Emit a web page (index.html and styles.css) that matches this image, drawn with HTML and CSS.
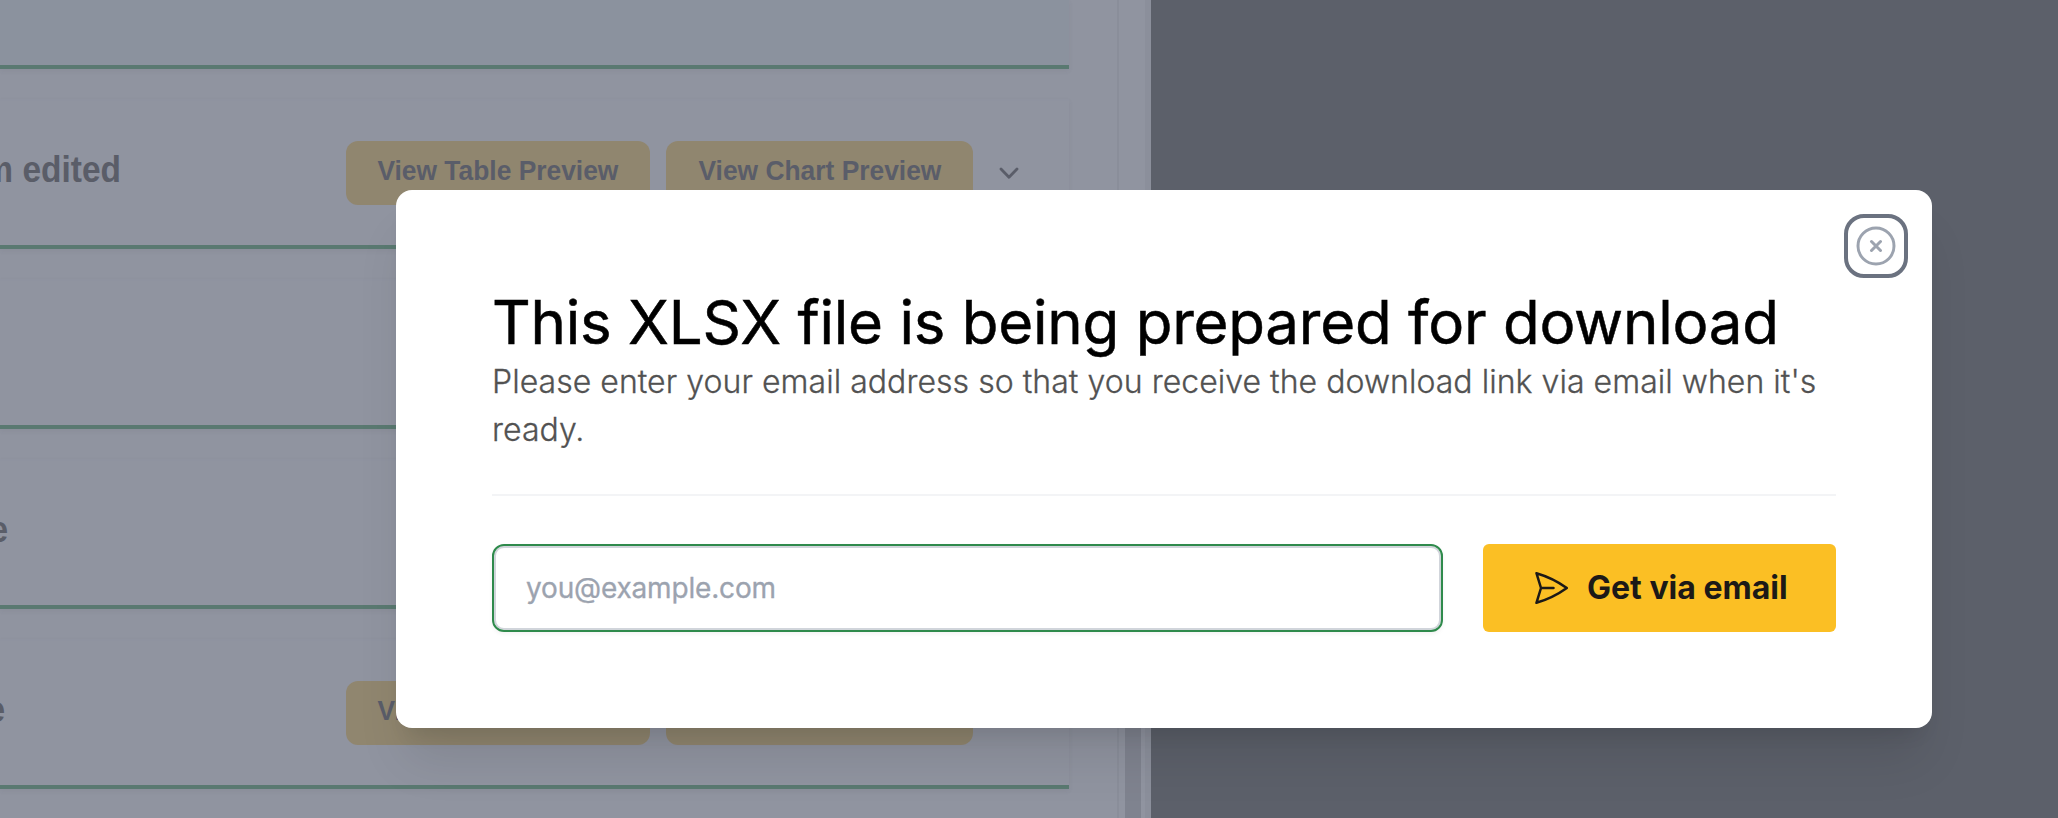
FILE: index.html
```html
<!DOCTYPE html>
<html lang="en">
<head>
<meta charset="utf-8">
<title>Download</title>
<link rel="stylesheet" href="styles.css">
</head>
<body>
<div class="page">
  <main class="panel">
    <div class="list">
      <section class="card card-head"></section>
      <section class="card">
        <div class="name name-long"><span>m edited</span></div>
        <div class="actions">
          <button class="preview table"><span>View Table Preview</span></button>
          <button class="preview chart"><span>View Chart Preview</span></button>
          <svg class="chevron" viewBox="0 0 20 12" fill="none"><path d="M2 2l8 8.2L18 2"/></svg>
        </div>
      </section>
      <section class="card"></section>
      <section class="card"><div class="name name-a"><span>e</span></div></section>
      <section class="card">
        <div class="name name-b"><span>e</span></div>
        <div class="actions">
          <button class="preview table"><span>View Table Preview</span></button>
          <button class="preview chart"><span>View Chart Preview</span></button>
        </div>
      </section>
    </div>
    <div class="gutter"><div class="thumb"></div></div>
  </main>
</div>
<div class="modal" role="dialog">
  <button class="close" aria-label="Close">
    <svg viewBox="0 0 24 24" fill="none"><path d="M9.75 9.75l4.5 4.5m0-4.5l-4.5 4.5M21 12a9 9 0 11-18 0 9 9 0 0118 0z"/></svg>
  </button>
  <h1 class="title"><span>This XLSX file is being prepared for download</span></h1>
  <p class="lead">Please enter your email address so that you receive the download link via email when it's ready.</p>
  <hr class="rule">
  <form class="form">
    <input class="email" type="email" placeholder="you@example.com">
    <button class="send" type="button">
      <svg viewBox="0 0 24 24" fill="none"><path d="M6 12L3.269 3.126A59.768 59.768 0 0121.485 12 59.77 59.77 0 013.27 20.876L5.999 12zm0 0h7.5"/></svg>
      <span>Get via email</span>
    </button>
  </form>
</div>
</body>
</html>
```

FILE: styles.css
```css
* { box-sizing: border-box; }
body { margin: 0; font-family: Inter, sans-serif; overflow: hidden; }
button { border: 0; font: inherit; padding: 0; }

.page { width: 2058px; height: 818px; background: #5c606a; overflow: hidden; }
.panel { display: flex; width: 1151px; height: 818px; background: #9094a0; border-right: 6px solid #8b8f9b; }
.list { width: 1117px; height: 818px; display: flex; flex-direction: column; gap: 30px; padding-right: 48px; flex: none; }
.card {
  display: flex; flex: none; align-items: flex-start; height: 150px;
  border-top: 2px solid #8f93a0; border-bottom: 4px solid #5a7971;
  box-shadow: 0 2px 5px rgba(60, 62, 75, .07);
}
.card-head { height: 69px; border-top: 0; background: #8b929e; }
.name { width: 120px; margin-top: 47px; display: flex; justify-content: flex-end; overflow: hidden; white-space: nowrap; flex: none;
  font: 700 36px/44px "Liberation Sans", sans-serif; color: #5a5d68; }
.name span { transform: scaleX(.93); transform-origin: right; }
.name-long { width: 121px; margin-right: -1px; }
.name-a { width: 8px; margin-right: 112px; }
.name-b { width: 5px; margin-right: 115px; }
.actions { display: flex; align-items: center; gap: 16px; margin: 40px 0 0 226px; }
.preview { height: 64px; border-radius: 12px; background: #90866f; color: #5a5d69; display: flex; justify-content: center; padding-top: 13px;
  font: 700 28px/34px "Liberation Sans", sans-serif; white-space: nowrap; overflow: hidden; }
.preview span { transform: scaleX(.942); }
.table { width: 304px; }
.chart { width: 307px; }
.chevron { width: 20px; height: 12px; margin-left: 10px; stroke: #5a5d69; stroke-width: 2.8; stroke-linecap: round; stroke-linejoin: round; }
.gutter { width: 28px; border-left: 2px solid #8a8e9a; padding: 380px 0 0 6px; }
.thumb { width: 16px; height: 438px; background: #7f838f; }

.modal { position: absolute; left: 396px; top: 190px; width: 1536px; height: 538px; padding: 96px; border-radius: 16px; background: #fff;
  box-shadow: 0 40px 50px -10px rgba(0, 0, 0, .1), 0 16px 20px -12px rgba(0, 0, 0, .1); }
.close { position: absolute; right: 24px; top: 24px; width: 64px; height: 64px; border: 4px solid #6b7280; border-radius: 20px; background: #fff;
  display: flex; align-items: center; justify-content: center; }
.close svg { width: 48px; height: 48px; flex: none; stroke: #9ca3af; stroke-width: 1.5; stroke-linecap: round; stroke-linejoin: round; }
.title { margin: 0; font-size: 60px; line-height: 72px; font-weight: 400; letter-spacing: -.24px; color: #000; white-space: nowrap;
  -webkit-text-stroke: .5px #000; }
.lead { margin: 0; font-size: 32px; line-height: 48px; font-weight: 300; letter-spacing: .04px; color: #525252; -webkit-text-stroke: .3px #525252; }
.rule { margin: 40px 0 48px; border: 0; height: 2px; background: #f3f4f6; }
.form { display: flex; gap: 40px; }
.email { flex: 1; min-width: 0; height: 88px; border: 2px solid #2f8a4c; border-radius: 12px; padding: 0 32px; background: #fff; outline: 0;
  font: 400 28px/40px Inter, sans-serif; letter-spacing: -.17px; box-shadow: inset 0 0 0 2px #d1d5db, 0 2px 4px rgba(0, 0, 0, .05); }
.email::placeholder { color: #9ca3af; opacity: 1; -webkit-text-stroke: .3px #9ca3af; }
.send { width: 353px; height: 88px; border-radius: 6px; background: #fbbf24; color: #1c1917; display: flex; align-items: center; padding-left: 48px; gap: 16px;
  font-size: 32px; font-weight: 700; white-space: nowrap; }
.send span { padding-bottom: 2px; }
.send svg { width: 40px; height: 40px; flex: none; stroke: currentColor; stroke-width: 1.5; stroke-linecap: round; stroke-linejoin: round; }
```
